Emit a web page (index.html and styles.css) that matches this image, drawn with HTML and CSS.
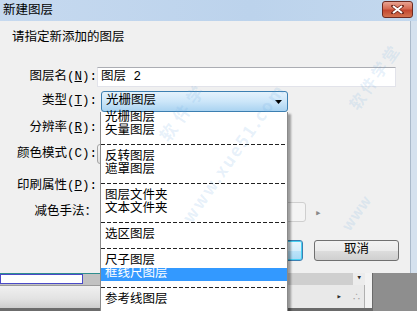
FILE: index.html
```html
<!DOCTYPE html>
<html lang="zh-CN">
<head>
    <meta charset="UTF-8">
    <meta name="viewport" content="width=device-width, initial-scale=1.0">
    <title>新建图层</title>
    <link rel="stylesheet" href="styles.css">
</head>
<body>
    <div class="screen">
        <!-- 对话框 -->
        <div class="dialog">
            <div class="titlebar">
                <span class="title">新建图层</span>
                <button class="close" type="button">
                    <svg width="13" height="9" viewBox="0 0 13 9">
                        <path d="M2 1 L11 8 M11 1 L2 8" stroke="#6b2418" stroke-width="3.4" stroke-linecap="square"/>
                        <path d="M2 1 L11 8 M11 1 L2 8" stroke="#fff" stroke-width="2"/>
                    </svg>
                </button>
            </div>
            <div class="frame">
                <div class="panel">
                    <p class="prompt">请指定新添加的图层</p>
                    <div class="form">
                        <div class="row row-name">
                            <label>图层名(<u>N</u>):</label>
                            <div class="textbox">图层 2</div>
                        </div>
                        <div class="row row-type">
                            <label>类型(<u>T</u>):</label>
                            <div class="combo-wrap">
                                <div class="combo">
                                    <span>光栅图层</span>
                                    <svg width="7" height="4" viewBox="0 0 7 4"><path d="M0 0 H7 L3.5 4 Z" fill="#000"/></svg>
                                </div>
                                <ul class="dropdown">
                                    <li>光栅图层</li>
                                    <li>矢量图层</li>
                                    <li class="sep"></li>
                                    <li>反转图层</li>
                                    <li>遮罩图层</li>
                                    <li class="sep"></li>
                                    <li>图层文件夹</li>
                                    <li>文本文件夹</li>
                                    <li class="sep"></li>
                                    <li>选区图层</li>
                                    <li class="sep"></li>
                                    <li>尺子图层</li>
                                    <li class="active">框线尺图层</li>
                                    <li class="sep"></li>
                                    <li>参考线图层</li>
                                </ul>
                            </div>
                        </div>
                        <div class="row row-gap">
                            <label>分辨率(<u>R</u>):</label>
                        </div>
                        <div class="row row-gap">
                            <label>颜色模式(C):</label>
                            <div class="selectbox"></div>
                        </div>
                        <div class="row row-wide">
                            <label>印刷属性(<u>P</u>):</label>
                        </div>
                        <div class="row row-gap">
                            <label>减色手法：</label>
                            <div class="disabled-box"></div>
                            <span class="spin">&#9656;</span>
                        </div>
                    </div>
                    <div class="buttons">
                        <button class="btn btn-default" type="button">确定</button>
                        <button class="btn" type="button">取消</button>
                    </div>
                </div>
                <div class="edge"></div>
            </div>
        </div>

        <!-- 下层窗口 -->
        <div class="behind">
            <div class="behind-left">
                <div class="strip"><div class="slot"></div></div>
                <div class="band"></div>
            </div>
            <div class="behind-panel">
                <div class="behind-top"><span class="mark">&#9662;</span></div>
                <div class="behind-body"><span class="mark">&#9656;</span><span class="grip">&#8756;</span></div>
            </div>
        </div>

        <!-- 水印 -->
        <span class="watermark wm-1">软件学</span>
        <span class="watermark wm-2">www.xue51.com</span>
        <span class="watermark wm-3">软件学堂</span>
        <span class="watermark wm-4">www</span>
    </div>
</body>
</html>
```

FILE: styles.css
```css
* {
    box-sizing: border-box;
}
body {
    margin: 0;
    font-family: "Liberation Mono", "Noto Sans CJK SC", monospace;
    font-size: 12.5px;
    color: #000;
}
.screen {
    position: relative;
    width: 417px;
    height: 311px;
    overflow: hidden;
    background: #8e8e8e;
}
.dialog {
    display: flex;
    flex-direction: column;
    height: 273px;
}
.titlebar {
    height: 21px;
    display: flex;
    align-items: flex-start;
    justify-content: space-between;
    padding: 0 4px 0 3px;
    background: linear-gradient(to right, #c6d9ef, #bcd3ec 60%, #c3d8ee);
}
.title {
    line-height: 13px;
    margin-top: 5px;
}
.close {
    width: 31px;
    height: 17px;
    margin-top: 1px;
    padding: 0;
    display: flex;
    align-items: center;
    justify-content: center;
    border: 1px solid #6e2a20;
    border-radius: 3px;
    background: linear-gradient(#e8a493, #d66a52 45%, #c4472f 55%, #d3734f);
}
.frame {
    flex: 1;
    display: flex;
}
.panel {
    width: 410px;
    background: #f0f0f0;
}
.edge {
    flex: 1;
    background: #d5e1ee;
    border-left: 1px solid #aab9ca;
}
.prompt {
    margin: 11px 0 0 12px;
    line-height: 13px;
}
.form {
    display: flex;
    flex-direction: column;
    margin-top: 22px;
}
.row {
    display: flex;
    align-items: center;
    height: 20px;
}
.row label {
    width: 97px;
    flex-shrink: 0;
    text-align: right;
    line-height: 13px;
}
.row-type {
    height: 21px;
    margin-top: 4px;
}
.row-gap {
    margin-top: 6px;
}
.row-wide {
    margin-top: 12px;
}
.textbox {
    width: 299px;
    height: 20px;
    padding: 3px 0 0 3px;
    line-height: 13px;
    background: #fff;
    border: 1px solid #e2e3ea;
    border-top-color: #abadb3;
}
.combo-wrap {
    position: relative;
    margin-left: 4px;
}
.combo {
    width: 187px;
    height: 21px;
    display: flex;
    align-items: center;
    justify-content: space-between;
    padding: 0 5px 0 4px;
    line-height: 13px;
    border: 1px solid #3c7fb1;
    border-radius: 3px;
    background: linear-gradient(#e4f2fc, #cce6f9 50%, #aad3f1);
}
.dropdown {
    position: absolute;
    top: 21px;
    left: -1px;
    z-index: 10;
    width: 188px;
    margin: 0;
    padding: 0 0 8px;
    list-style: none;
    background: #fff;
    border: 1px solid #8a8a8a;
    border-top: none;
    box-shadow: 3px 2px 2px rgba(0, 0, 0, 0.35);
}
.dropdown li {
    height: 13px;
    line-height: 13px;
    padding-left: 4px;
}
.dropdown li.sep {
    background: repeating-linear-gradient(to right, #222 0 4px, transparent 4px 6px) left center / 100% 1px no-repeat;
}
.dropdown li.active {
    background: #3399ff;
    color: #fff;
}
.selectbox {
    width: 160px;
    height: 20px;
    border: 1px solid #a5a5a5;
    border-radius: 3px;
    background: linear-gradient(#f6f6f6, #dedede);
}
.disabled-box {
    width: 206px;
    height: 20px;
    margin-left: 3px;
    border: 1px solid #cfcfcf;
    border-radius: 3px;
    background: #f4f4f4;
}
.spin {
    margin-left: 9px;
    color: #8a8a8a;
    font-size: 11px;
}
.buttons {
    display: flex;
    justify-content: flex-end;
    gap: 11px;
    margin-top: 18px;
    padding-right: 11px;
}
.btn {
    width: 85px;
    height: 21px;
    padding: 0;
    font: inherit;
    line-height: 13px;
    border: 1px solid #707070;
    border-radius: 3px;
    background: linear-gradient(#f2f2f2, #ebebeb 50%, #dddddd 51%, #cfcfcf);
}
.btn-default {
    border-color: #3c7fb1;
    box-shadow: inset 0 0 0 1px #48d1f3;
    background: linear-gradient(#e9f6fd, #d6eefb 50%, #bde4f9 51%, #a7d9f5);
}
.behind {
    display: flex;
    height: 38px;
}
.behind-left {
    width: 287px;
    display: flex;
    flex-direction: column;
    border-top: 1px solid #2f8e8e;
}
.strip {
    height: 11px;
    background: #c2c2c2;
}
.slot {
    width: 83px;
    height: 10px;
    background: #fff;
    border: 1px solid #4a4ac8;
}
.band {
    flex: 1;
    background: linear-gradient(#f0f0f0, #e2e2e2 60%, #cdcdcd);
    border-top: 1px solid #9a9a9a;
    border-bottom: 3px solid #6c6c6c;
}
.behind-panel {
    width: 86px;
    display: flex;
    flex-direction: column;
    background: #f3f3f3;
    border-right: 1px solid #6a6a6a;
    border-bottom: 3px solid #6a6a6a;
    padding-right: 7px;
}
.behind-top {
    height: 12px;
    display: flex;
    justify-content: flex-end;
    padding-right: 3px;
    background: linear-gradient(to right, #cfcfcf 85%, #ececec 85%);
}
.behind-body {
    flex: 1;
    display: flex;
    align-items: center;
    justify-content: flex-end;
    gap: 10px;
    padding-right: 3px;
    background: #e9e9e9;
    border-right: 1px solid #b0b0b0;
}
.mark {
    font-size: 9px;
    line-height: 10px;
    color: #303030;
}
.grip {
    font-size: 9px;
    color: #9a9a9a;
}
.watermark {
    position: absolute;
    z-index: 20;
    font-family: "Noto Sans CJK SC", sans-serif;
    font-weight: bold;
    color: rgba(110, 170, 225, 0.17);
    white-space: nowrap;
    transform: rotate(-55deg);
    pointer-events: none;
}
.wm-1 {
    left: 148px;
    top: 98px;
    font-size: 17px;
    letter-spacing: 6px;
}
.wm-2 {
    left: 150px;
    top: 140px;
    font-size: 17px;
    letter-spacing: 2px;
}
.wm-3 {
    left: 336px;
    top: 64px;
    font-size: 16px;
    letter-spacing: 3px;
}
.wm-4 {
    left: 336px;
    top: 202px;
    font-size: 15px;
}
```
